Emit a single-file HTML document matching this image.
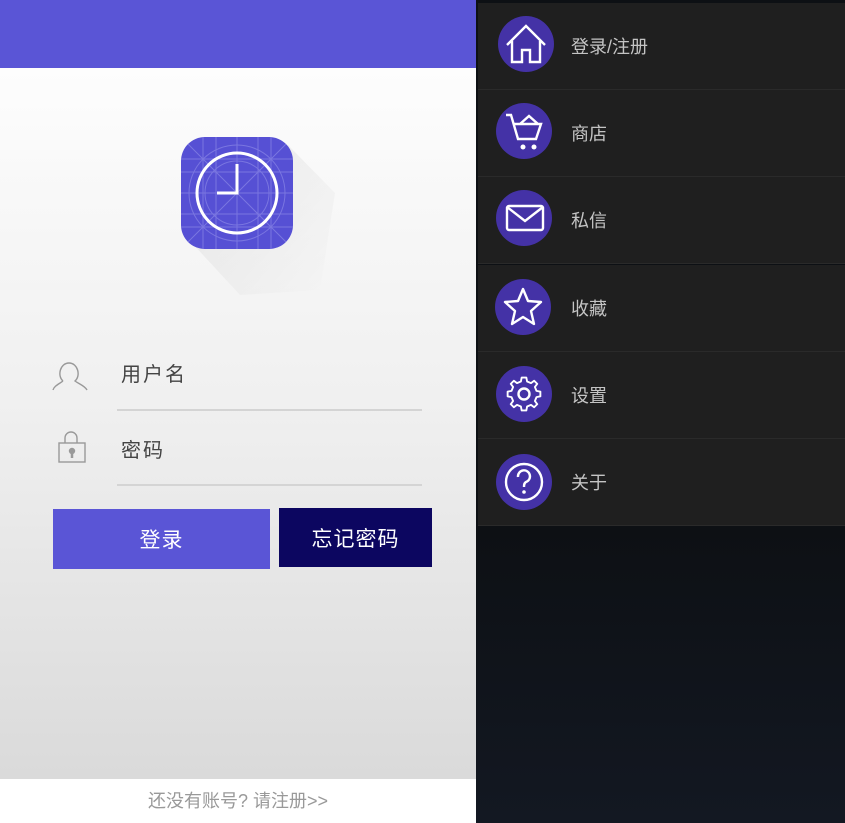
<!DOCTYPE html>
<html><head><meta charset="utf-8"><style>
*{margin:0;padding:0;box-sizing:border-box}
body{width:845px;height:823px;overflow:hidden;position:relative;font-family:"Liberation Sans","Noto Sans CJK SC",sans-serif;background:#111}
#left{position:absolute;left:0;top:0;width:476px;height:823px;background:linear-gradient(#fdfdfd 68px,#f0f0f0 400px,#dadada 779px)}
#hdr{position:absolute;left:0;top:0;width:476px;height:68px;background:#5a55d6}
.lbl{position:absolute;font-size:20px;color:#444;letter-spacing:2px}
.line{position:absolute;left:117px;width:305px;height:2px;background:#d4d4d4}
.btn{position:absolute;top:509px;height:60px;color:#fff;font-size:21px;display:flex;align-items:center;justify-content:center;letter-spacing:1px}
#foot{position:absolute;left:0;top:779px;width:476px;height:44px;background:#fff;text-align:center;line-height:44px;color:#999;font-size:18px}
#right{position:absolute;left:476px;top:0;width:369px;height:823px;background:linear-gradient(#0d1014 526px,#131822)}
.row{position:absolute;left:2px;width:367px;height:87px;background:#1f1f1f;border-bottom:1px solid #2a2a2a}
.c{position:absolute;width:56px;height:56px;border-radius:50%;background:#4432a6}
.c svg{position:absolute;left:0;top:0}
.t{position:absolute;left:93px;font-size:18px;color:#c4c4c4}
</style></head><body>
<div id="left">
<div id="hdr"></div>
<svg style="position:absolute;left:170px;top:125px" width="180" height="190">
<defs><linearGradient id="sh" x1="0" y1="0" x2="1" y2="1"><stop offset="0.3" stop-color="#000" stop-opacity=".05"/><stop offset="1" stop-color="#000" stop-opacity="0"/></linearGradient>
<clipPath id="cp"><rect x="11" y="12" width="112" height="112" rx="24"/></clipPath></defs>
<polygon points="118,20 165,68 150,165 70,170 22,118" fill="url(#sh)"/>
<rect x="11" y="12" width="112" height="112" rx="24" fill="#5650d4"/>
<g stroke="#8a86e6" stroke-width="1" fill="none" opacity=".7" clip-path="url(#cp)">
<line x1="33" y1="12" x2="33" y2="124"/><line x1="46" y1="12" x2="46" y2="124"/><line x1="67" y1="12" x2="67" y2="124"/><line x1="88" y1="12" x2="88" y2="124"/><line x1="101" y1="12" x2="101" y2="124"/>
<line x1="11" y1="34" x2="123" y2="34"/><line x1="11" y1="47" x2="123" y2="47"/><line x1="11" y1="68" x2="123" y2="68"/><line x1="11" y1="89" x2="123" y2="89"/><line x1="11" y1="102" x2="123" y2="102"/>
<line x1="11" y1="12" x2="123" y2="124"/><line x1="123" y1="12" x2="11" y2="124"/>
<circle cx="67" cy="68" r="32"/><circle cx="67" cy="68" r="48"/>
</g>
<circle cx="67" cy="68" r="40" fill="none" stroke="#fff" stroke-width="3"/>
<polyline points="67,39 67,68 47,68" fill="none" stroke="#fff" stroke-width="3"/>
</svg>
<svg style="position:absolute;left:52px;top:360px" width="36" height="32" fill="none" stroke="#999" stroke-width="1.4">
<path d="M11,21 C5,16 8,3 17,3 C26,3 29,16 23,21 C27,24 33,26 35,30 M11,21 C7,24 2,26 1,30"/>
</svg>
<svg style="position:absolute;left:57px;top:430px" width="30" height="36" fill="none" stroke="#999" stroke-width="1.4">
<path d="M8,13 V8 A6,6 0 0 1 20,8 V13"/><rect x="2" y="13" width="26" height="19"/>
<circle cx="15" cy="21" r="2.5" fill="#999"/><line x1="15" y1="22" x2="15" y2="28" stroke-width="2.5"/>
</svg>
<div class="lbl" style="left:121px;top:358px">用户名</div>
<div class="line" style="top:409px"></div>
<div class="lbl" style="left:121px;top:434px">密码</div>
<div class="line" style="top:484px"></div>
<div class="btn" style="left:53px;width:217px;background:#5a55d6">登录</div>
<div class="btn" style="left:279px;top:508px;width:153px;height:59px;background:#0c0660">忘记密码</div>
<div id="foot">还没有账号? 请注册&gt;&gt;</div>
</div>
<div id="right">
<div class="row" style="top:3px"><div class="c" style="left:20px;top:13px"><svg width="56" height="56" fill="none" stroke="#fff" stroke-width="2.4"><path d="M9,29 L28,10 L47,29 M14,25 V46 H24 V34 H32 V46 H42 V25"/></svg></div><div class="t" style="top:30px">登录/注册</div></div>
<div class="row" style="top:90px"><div class="c" style="left:18px;top:13px"><svg width="56" height="56" fill="none" stroke="#fff" stroke-width="2.4"><path d="M10,12 H15 L22,36 H40 L45,21 H18 M24,21 L33,13 L42,21"/><circle cx="27" cy="44" r="2.5" fill="#fff" stroke="none"/><circle cx="38" cy="44" r="2.5" fill="#fff" stroke="none"/></svg></div><div class="t" style="top:30px">商店</div></div>
<div class="row" style="top:177px"><div class="c" style="left:18px;top:13px"><svg width="56" height="56" fill="none" stroke="#fff" stroke-width="2.4"><rect x="11" y="16" width="36" height="24" rx="2"/><path d="M11,17 L29,31 L47,17"/></svg></div><div class="t" style="top:30px">私信</div></div>
<div class="row" style="top:265px"><div class="c" style="left:17px;top:14px"><svg width="56" height="56" fill="none" stroke="#fff" stroke-width="2.4" stroke-linejoin="round"><path d="M28,10 L33,22 L46,23 L36,32 L39,45 L28,38 L17,45 L20,32 L10,23 L23,22 Z"/></svg></div><div class="t" style="top:30px">收藏</div></div>
<div class="row" style="top:352px"><div class="c" style="left:18px;top:14px"><svg width="56" height="56" fill="none" stroke="#fff" stroke-width="2.4" stroke-linejoin="round"><g transform="translate(28,28) scale(0.78) translate(-28,-31)"><path d="M25,10 H31 L32,15 L37,17 L41,14 L45,18 L42,22 L44,27 L49,28 V34 L44,35 L42,40 L45,44 L41,48 L37,45 L32,47 L31,52 H25 L24,47 L19,45 L15,48 L11,44 L14,40 L12,35 L7,34 V28 L12,27 L14,22 L11,18 L15,14 L19,17 L24,15 Z"/></g><circle cx="28" cy="28" r="5.5"/></svg></div><div class="t" style="top:30px">设置</div></div>
<div class="row" style="top:439px"><div class="c" style="left:18px;top:15px"><svg width="56" height="56" fill="none" stroke="#fff" stroke-width="2.4"><circle cx="28" cy="28" r="18"/><path d="M22,23 A6,6 0 1 1 30,28 C28,29 28,31 28,33"/><circle cx="28" cy="38" r="1.8" fill="#fff" stroke="none"/></svg></div><div class="t" style="top:30px">关于</div></div>
</div>
</body></html>
